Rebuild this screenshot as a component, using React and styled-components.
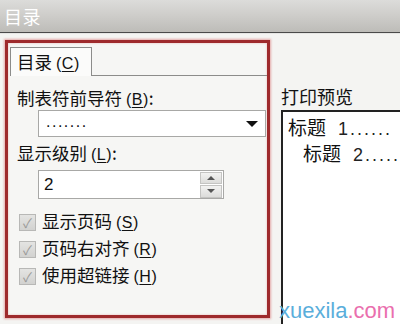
import React from "react";
import styled, { createGlobalStyle } from "styled-components";

const Global = createGlobalStyle`
  html, body { margin: 0; padding: 0; }
  body {
    width: 400px; height: 324px; overflow: hidden;
    background: #f4f4f2;
    font-family: "Noto Sans CJK SC", "Noto Sans", sans-serif;
    color: #111;
  }
`;

const Window = styled.div`
  width: 400px; height: 324px; position: relative; overflow: hidden;
  display: flex; flex-direction: column;
`;

const TitleBar = styled.div`
  height: 32px;
  flex: none;
  background: linear-gradient(#dcdcda, #cfcecb 45%, #bdbcb8);
  border-bottom: 1px solid #4a4a4a;
  box-shadow: 0 1px 0 #e6e6e4;
  color: #fff;
  font-size: 18px;
  line-height: 32px;
  padding-left: 4px;
  letter-spacing: 0.5px;
`;

const Body = styled.div`
  display: flex;
  align-items: flex-start;
  padding: 7px 0 0 5px;
  flex: 1;
`;

const RedBox = styled.div`
  width: 265px;
  height: 278px;
  box-sizing: border-box;
  border: 3px solid #9e2a2c;
  box-shadow: 0 0 2px 1px rgba(210, 80, 80, 0.45), inset 0 0 2px rgba(210, 80, 80, 0.45);
  display: flex;
  flex-direction: column;
  padding: 4px 0 0 2px;
  background: #f6f6f4;
`;

const TabStrip = styled.div`
  display: flex;
  height: 28px;
  flex: none;
  border-bottom: 1px solid #8c8c8a;
`;

const Tab = styled.div`
  width: 82px;
  border: 1px solid #8c8c8a;
  border-bottom: none;
  background: #fbfbfa;
  font-size: 17.5px;
  line-height: 28px;
  padding-left: 6px;
  box-sizing: border-box;
  margin-bottom: -1px;
  height: 29px;
`;

const Panel = styled.div`
  display: flex;
  flex-direction: column;
  padding: 10px 0 0 7px;
`;

const Label = styled.div`
  font-size: 17.5px;
  line-height: 24px;
  height: 24px;
  margin-top: ${(p) => p.$mt || 0}px;
  white-space: nowrap;
`;

const Select = styled.div`
  margin: 0 0 0 21px;
  width: 228px;
  height: 27px;
  box-sizing: border-box;
  border: 1px solid #a8a8a6;
  background: #fff;
  display: flex;
  align-items: center;
  justify-content: space-between;
  padding: 0 6px 0 7px;
`;

const Dots = styled.span`
  font-family: "Liberation Sans", sans-serif;
  font-size: 16px;
  letter-spacing: 1.5px;
  margin-top: -4px;
`;

const Arrow = styled.span`
  width: 0; height: 0;
  border-left: 6px solid transparent;
  border-right: 6px solid transparent;
  border-top: 6px solid #111;
  margin-right: 1px;
`;

const Spinner = styled.div`
  margin: 5px 0 0 21px;
  width: 186px;
  height: 29px;
  box-sizing: border-box;
  border: 1px solid #a8a8a6;
  background: #fff;
  display: flex;
  align-items: center;
  justify-content: space-between;
  padding: 1px 1px 1px 5px;
`;

const SpinValue = styled.span`
  font-family: "Liberation Sans", sans-serif;
  font-size: 17px;
`;

const SpinButtons = styled.div`
  display: flex;
  flex-direction: column;
  gap: 1px;
  width: 22px;
  height: 26px;
`;

const SpinBtn = styled.div`
  flex: 1;
  background: linear-gradient(#f2f2f1, #dcdcda);
  border: 1px solid #c4c4c2;
  display: flex;
  align-items: center;
  justify-content: center;
  &::after {
    content: "";
    border-left: 4px solid transparent;
    border-right: 4px solid transparent;
    ${(p) => (p.$up ? "border-bottom: 4px solid #555;" : "border-top: 4px solid #555;")}
  }
`;

const Checks = styled.div`
  display: flex;
  flex-direction: column;
  gap: 9px;
  margin-top: 14px;
  margin-left: 2px;
`;

const CheckRow = styled.div`
  display: flex;
  align-items: center;
  gap: 6px;
  height: 18px;
`;

const Box = styled.div`
  width: 17px;
  height: 17px;
  box-sizing: border-box;
  border: 1px solid #b8b8b6;
  background: linear-gradient(#e4e4e2, #d2d2d0);
  display: flex;
  align-items: center;
  justify-content: center;
  color: #9a9a98;
  font-size: 13px;
  line-height: 1;
`;

const CheckText = styled.span`
  font-size: 17.5px;
  line-height: 18px;
  white-space: nowrap;
`;

const Right = styled.div`
  margin-left: 11px;
  margin-top: 44px;
  display: flex;
  flex-direction: column;
  flex: 1;
  min-width: 0;
`;

const PreviewTitle = styled.div`
  font-size: 18px;
  line-height: 24px;
  height: 26px;
`;

const Preview = styled.div`
  border: 2px solid #222;
  border-right: none;
  background: #fff;
  height: 240px;
  padding: 3px 0 0 5px;
  font-size: 19px;
  line-height: 23px;
  white-space: nowrap;
  overflow: hidden;
`;

const PLine = styled.div`
  padding-left: ${(p) => p.$indent || 0}px;
`;

const Num = styled.span`
  font-family: "Liberation Sans", sans-serif;
  font-size: 18px;
  margin-left: 12px;
  letter-spacing: 2px;
  color: #222;
`;

const Watermark = styled.div`
  position: absolute;
  left: 279px;
  top: 298px;
  font-family: "Liberation Sans", "Noto Sans", sans-serif;
  font-size: 22px;
  line-height: 26px;
  font-weight: 500;
`;

const WBlue = styled.span` color: #5aaedb; `;
const WPink = styled.span` color: #ea6fae; `;

const KeyWrap = styled.span`
  font-family: "Liberation Sans", sans-serif;
  font-size: 16px;
  margin-left: 4px;
  letter-spacing: 0.5px;
`;

const U = styled.u`
  text-underline-offset: 2px;
`;

const Key = ({ k }) => (
  <KeyWrap>
    (<U>{k}</U>)
  </KeyWrap>
);

export default function App() {
  return (
    <>
      <Global />
      <Window>
        <TitleBar>目录</TitleBar>
        <Body>
          <RedBox>
            <TabStrip>
              <Tab>目录<Key k="C" /></Tab>
            </TabStrip>
            <Panel>
              <Label>制表符前导符<Key k="B" />:</Label>
              <Select>
                <Dots>.......</Dots>
                <Arrow />
              </Select>
              <Label $mt={4}>显示级别<Key k="L" />:</Label>
              <Spinner>
                <SpinValue>2</SpinValue>
                <SpinButtons>
                  <SpinBtn $up />
                  <SpinBtn />
                </SpinButtons>
              </Spinner>
              <Checks>
                <CheckRow><Box>✓</Box><CheckText>显示页码<Key k="S" /></CheckText></CheckRow>
                <CheckRow><Box>✓</Box><CheckText>页码右对齐<Key k="R" /></CheckText></CheckRow>
                <CheckRow><Box>✓</Box><CheckText>使用超链接<Key k="H" /></CheckText></CheckRow>
              </Checks>
            </Panel>
          </RedBox>
          <Right>
            <PreviewTitle>打印预览</PreviewTitle>
            <Preview>
              <PLine>标题<Num>1......</Num></PLine>
              <PLine $indent={15}>标题<Num>2.....</Num></PLine>
            </Preview>
          </Right>
        </Body>
        <Watermark><WBlue>xuexila</WBlue><WPink>.com</WPink></Watermark>
      </Window>
    </>
  );
}
